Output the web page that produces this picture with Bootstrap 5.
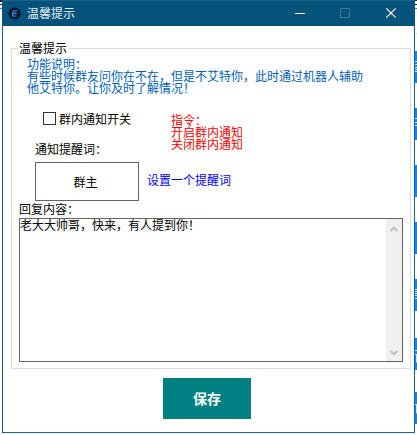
<!DOCTYPE html>
<html lang="zh-CN">
<head>
<meta charset="utf-8">
<meta name="viewport" content="width=device-width, initial-scale=1">
<title>温馨提示</title>
<link href="https://cdn.jsdelivr.net/npm/bootstrap@5.3.0/dist/css/bootstrap.min.css" rel="stylesheet">
<style>
body{width:417px;height:435px;overflow:hidden;background:#fff;color:#000;font:12px/12px "Noto Sans CJK SC",sans-serif}
.edge-left{width:2px;background:linear-gradient(#222 0 2px,#fff 2px 4px,#222 4px 5px,#fff 5px 8px,#0a84ff 8px 9px,#fff 9px 33px,#ddd 33px 34px,#fff 34px)}
.dialog-window{width:413px;height:433px;border:1px solid #17658c;border-top:0}
.title-strip{height:26px;margin:0 -1px;padding-left:5px;background:#05527b;border-top:1px solid #1a6289;color:#e6eef2;line-height:18px}
.title-strip .caption{margin:-2px 0 0 5px}
.title-strip .controls{margin-left:auto}
.client{padding:22px 3px 0 8px}
.group-box{width:400px;height:321px;border:1px solid #dcdcdc;padding:0 7px}
.group-title{align-self:flex-start;height:12px;margin-top:-7px;padding-right:2px;background:#fff;white-space:nowrap}
.intro{height:36px;margin:4px 0 0 8px;color:#005fb8;white-space:nowrap}
.options{height:61px}
.left-col{width:152px;padding:18px 0 0 16px}
.check-line{height:13px;padding-left:8px}
.check-line .check-square{width:13px;height:13px;border:1px solid #333;border-radius:0;margin:0 3px 0 0}
.check-line label{line-height:13px}
.word-label{margin-top:18px;height:12px}
.red-note{color:#f00;padding-top:20px}
.word-line{height:39px;padding-left:16px;margin-top:7px}
.word-box{width:104px;height:39px;padding-right:3px;border:1px solid #646464}
.hint{color:#00f;margin:-3px 0 0 8px}
.reply-label{height:12px;margin-top:2px}
.reply-box{width:384px;height:144px;margin-top:3px;border:1px solid #646464}
.scroll-track{width:16px;background:#f0f0f0;padding:7px 0 5px}
.save-btn{width:88px;height:41px;margin:9px 0 0 152px;padding:0;border:0;border-radius:0;background:#008080;color:#fff;font-size:14px;font-weight:700;line-height:41px}
.save-btn:hover{background:#007070;color:#fff}
.edge-right{width:2px;height:435px}
</style>
</head>
<body>
<div class="d-flex h-100">
  <div class="edge-left flex-shrink-0"></div>
  <main class="dialog-window flex-shrink-0">
    <header class="title-strip d-flex align-items-center">
      <svg width="15" height="15" viewBox="0 0 15 15"><circle cx="7.5" cy="7.5" r="6.7" fill="#07172e" stroke="#0b4b8c" stroke-width="1.2"/><path d="M10.500 5H6.300L5.300 10h4.200M5.800 7.500h4" fill="none" stroke="#3c9be0" stroke-width="1.2"/></svg>
      <span class="caption">温馨提示</span>
      <svg class="controls" width="120" height="25" viewBox="295 1 120 25"><path d="M295 13.5h10" stroke="#fff"/><path d="M340.5 8.500h9v9h-9z" fill="none" stroke="#3d7797"/><path d="M386.300 8.300l9.400 9.400m0-9.400l-9.400 9.400" stroke="#fff" stroke-width="1.200"/></svg>
    </header>
    <div class="client">
      <section class="group-box d-flex flex-column">
        <div class="group-title">温馨提示</div>
        <div class="intro">功能说明：<br>有些时候群友问你在不在，但是不艾特你，此时通过机器人辅助<br>他艾特你。让你及时了解情况！</div>
        <div class="options d-flex flex-shrink-0">
          <div class="left-col">
            <div class="check-line d-flex text-nowrap"><input class="form-check-input check-square" type="checkbox" id="notify"><label for="notify">群内通知开关</label></div>
            <div class="word-label">通知提醒词：</div>
          </div>
          <div class="red-note">指令：<br>开启群内通知<br>关闭群内通知</div>
        </div>
        <div class="word-line d-flex align-items-center flex-shrink-0">
          <div class="word-box d-flex align-items-center justify-content-center">群主</div>
          <div class="hint">设置一个提醒词</div>
        </div>
        <div class="reply-label">回复内容：</div>
        <div class="reply-box d-flex flex-shrink-0">
          <div class="flex-grow-1">老大大帅哥，快来，有人提到你！</div>
          <div class="scroll-track d-flex flex-column align-items-center justify-content-between">
            <svg width="8" height="6" viewBox="0 0 8 6"><path d="M.7 5L4 1.700 7.300 5" fill="none" stroke="#bfbfbf" stroke-width="2"/></svg>
            <svg width="8" height="6" viewBox="0 0 8 6"><path d="M.7 1L4 4.300 7.300 1" fill="none" stroke="#bfbfbf" stroke-width="2"/></svg>
          </div>
        </div>
      </section>
      <button class="btn save-btn d-block" type="button">保存</button>
    </div>
  </main>
  <svg class="edge-right flex-shrink-0" viewBox="0 0 2 435"><path d="M0 0h2v1H0zM0 4h2v1H0z" fill="#222"/><path d="M0 8h2v1H0zM0 51h2v32H0zM0 108h2v32H0zM0 165h2v32H0zM0 222h2v32H0zM0 279h2v32H0zM0 338h2v32H0zM0 392h2v32H0z" fill="#0a84ff"/><path d="M0 33h2v1H0z" fill="#ddd"/><path d="M0 61.500h2m-2 3h2m-2 3h2m-2 2h2m-2 2h2M0 118.500h2m-2 4h2m-2 3h2M0 289.500h2m-2 2h2m-2 2h2m-2 2h2m-2 3h2M0 350.500h2m-2 4h2m-.5 0v8M0 404.500h2m-.5 0v9" fill="none" stroke="#fff" opacity=".8"/></svg>
</div>
<script src="https://cdn.jsdelivr.net/npm/bootstrap@5.3.0/dist/js/bootstrap.bundle.min.js"></script>
</body>
</html>
